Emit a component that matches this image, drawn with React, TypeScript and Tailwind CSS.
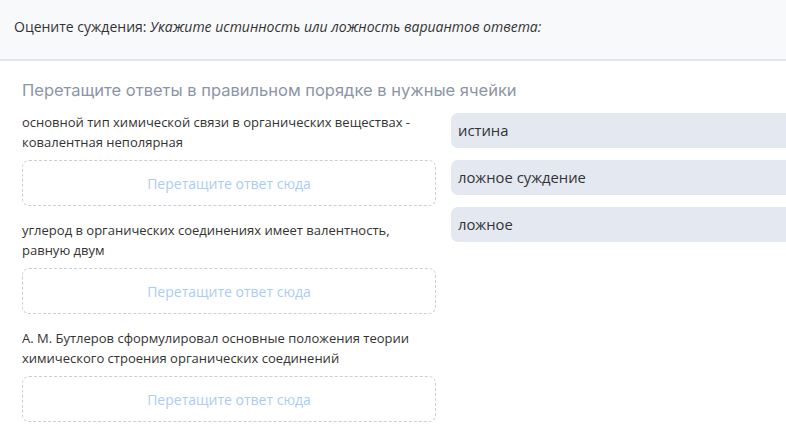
const statements = [
  'основной тип химической связи в органических веществах - ковалентная неполярная',
  'углерод в органических соединениях имеет валентность, равную двум',
  'А. М. Бутлеров сформулировал основные положения теории химического строения органических соединений',
];

const answers = ['истина', 'ложное суждение', 'ложное'];

export default function App() {
  return (
    <div className="h-[437px] w-[786px] overflow-hidden bg-white font-['Open_Sans',sans-serif] text-[#333]">
      <div className="flex h-[61px] items-center border-b-2 border-[#dfe4ee] bg-[#f8f9fb] px-[14px] pb-[6px] text-[14px]">
        <span>
          Оцените суждения: <i>Укажите истинность или ложность вариантов ответа:</i>
        </span>
      </div>

      <div className="px-[22px] pt-[17px]">
        <h2 className="font-['Inter',sans-serif] text-[16.5px] leading-[24px] text-[#8b95a5]">
          Перетащите ответы в правильном порядке в нужные ячейки
        </h2>

        <div className="mt-[10px] flex gap-[15px]">
          <div className="flex w-[414px] shrink-0 flex-col">
            {statements.map((text, i) => (
              <div key={i} className="mb-[14px]">
                <p className="pr-[10px] text-[13px] leading-[20px]">{text}</p>
                <div className="mt-[8px] flex h-[46px] items-center justify-center rounded-[7px] border border-dashed border-[#c6cfdc] text-[14px] text-[#a9cdf7]">
                  Перетащите ответ сюда
                </div>
              </div>
            ))}
          </div>

          <div className="flex w-[414px] shrink-0 flex-col gap-[12px] pt-[1px]">
            {answers.map((a) => (
              <div
                key={a}
                className="flex h-[35px] items-center rounded-[7px] bg-[#e3e8f1] pl-[7px] text-[14.8px]"
              >
                {a}
              </div>
            ))}
          </div>
        </div>
      </div>
    </div>
  );
}
